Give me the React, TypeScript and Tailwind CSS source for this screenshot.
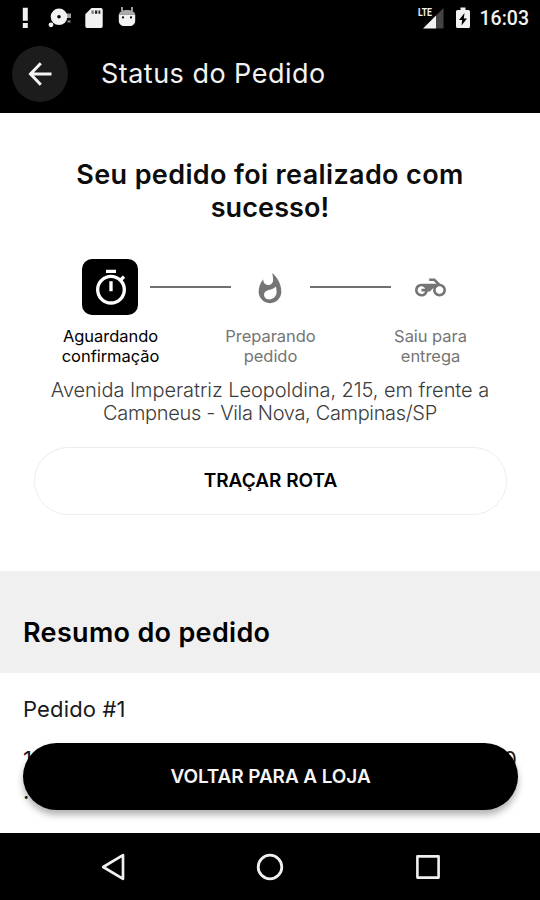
import React from "react";

const TIMER =
  "M15 1H9v2h6V1zm-4 13h2V8h-2v6zm8.03-6.61l1.42-1.42c-.43-.51-.9-.99-1.41-1.41l-1.42 1.42C16.07 4.74 14.12 4 12 4c-4.97 0-9 4.03-9 9s4.02 9 9 9 9-4.03 9-9c0-2.12-.74-4.07-1.97-5.61zM12 20c-3.87 0-7-3.13-7-7s3.13-7 7-7 7 3.13 7 7-3.13 7-7 7z";
const FLAME =
  "M13.5.67s.74 2.65.74 4.8c0 2.06-1.35 3.73-3.41 3.73-2.07 0-3.63-1.67-3.63-3.73l.03-.36C5.21 7.51 4 10.62 4 14c0 4.42 3.58 8 8 8s8-3.58 8-8C20 8.61 17.41 3.8 13.5.67zM11.4 19.400c-2.100 0-3.600-1.400-3.600-3.300 0-1.800 1.200-3 3.300-3.400 2-.4 3.900-1.200 5-2.500.4 1.200.6 2.500.6 3.800 0 3-2.300 5.400-5.300 5.400z";
const MOTORCYCLE =
  "M19.44 9.03L15.41 5H11v2h3.59l2 2H5c-2.8 0-5 2.2-5 5s2.2 5 5 5c2.46 0 4.45-1.69 4.9-4h1.65l2.77-2.77c-.21.54-.32 1.14-.32 1.77 0 2.8 2.2 5 5 5s5-2.2 5-5c0-2.65-1.97-4.77-4.56-4.97zM7.82 15C7.4 16.15 6.28 17 5 17c-1.63 0-3-1.37-3-3s1.37-3 3-3c1.28 0 2.4.85 2.82 2H5v2h2.82zM19 17c-1.66 0-3-1.34-3-3s1.34-3 3-3 3 1.34 3 3-1.34 3-3 3z";

function Glyph({ d, className }: { d: string; className: string }) {
  return (
    <svg viewBox="0 0 24 24" fill="currentColor" className={className}>
      <path d={d} />
    </svg>
  );
}

function StatusBar() {
  return (
    <div className="flex h-9 items-center pr-[11px] pl-[22px] font-['Roboto',sans-serif] text-[#f2f2f2]">
      <svg width="6" height="22" viewBox="0 0 6 22" fill="currentColor">
        <path d="M.8.8h5v13h-5zM.8 16h5v5h-5z" />
      </svg>
      <svg width="24" height="22" viewBox="0 0 24 22" fill="currentColor" className="ml-5">
        <path fillRule="evenodd" d="M11 1.500a8.300 8.300 0 1 1 0 16.600 8.300 8.300 0 0 1 0-16.600zm0 6.500a1.800 1.800 0 1 0 0 3.600 1.800 1.800 0 0 0 0-3.600z" />
        <circle cx="3" cy="17.800" r="2.400" />
        <path d="M18 6.500h5v4.500h-5z" opacity=".65" />
        <path d="M19.500 13.500h3v2h-3z" opacity=".6" />
      </svg>
      <svg width="18" height="22" viewBox="0 0 18 22" fill="currentColor" className="ml-[13px]">
        <path d="M6.500 1H16a1.700 1.700 0 0 1 1.700 1.700v16.600A1.700 1.700 0 0 1 16 21H2a1.700 1.700 0 0 1-1.700-1.700V7.200z" />
        <path d="M6.500 3.500h2.300v3.300H6.500z" fill="#777" />
        <path d="M10 3.500h2.300v3.300H10zM13.500 3.500h1.800v3.300h-1.800z" fill="#222" />
      </svg>
      <svg width="18" height="22" viewBox="0 0 18 22" fill="currentColor" className="ml-[15px]">
        <path d="M4 0v4M14 0v4" stroke="currentColor" strokeWidth="1.300" />
        <path d="M.8 7.500C1.500 4.500 4.500 3 9 3s7.500 1.500 8.200 4.500z" opacity=".7" />
        <path fillRule="evenodd" d="M.8 7.500h16.400v6c0 3.600-2.400 5.500-5.500 5.500H6.300C3.200 19 .8 17.100.8 13.500zM5 9.300a1.100 1.100 0 1 0 0 2.200 1.100 1.100 0 0 0 0-2.200zm8 0a1.100 1.100 0 1 0 0 2.200 1.100 1.100 0 0 0 0-2.200z" />
      </svg>
      <div className="ml-auto flex items-center">
        <svg width="28" height="24" viewBox="0 0 28 24" fill="currentColor">
          <path d="M25.500 2v20.500H18V9.500z" opacity=".28" />
          <path d="M18 9.500v13H5z" />
          <text x="0" y="9.800" fontSize="11.500" fontWeight="700" textLength="14" lengthAdjust="spacingAndGlyphs">
            LTE
          </text>
        </svg>
        <svg width="14" height="22" viewBox="0 0 14 22" fill="currentColor" className="ml-2.5">
          <path fillRule="evenodd" d="M4.500.5h5V3h3A1.500 1.500 0 0 1 14 4.500v15a1.500 1.500 0 0 1-1.500 1.500h-11A1.500 1.500 0 0 1 0 19.500v-15A1.500 1.500 0 0 1 1.500 3h3zM8.500 6L3 13h3.200L5.500 18.500l5.500-7H7.800z" />
        </svg>
        <span className="ml-2.5 pt-px text-[19.5px] leading-6 font-medium">16:03</span>
      </div>
    </div>
  );
}

function AppBar() {
  return (
    <header className="flex h-[77px] items-start pt-2.5 pl-3">
      <button className="flex size-14 items-center justify-center rounded-full bg-[#1c1c1c] text-[#f4f4f4]">
        <svg width="24" height="24" viewBox="0 0 24 24" fill="none" stroke="currentColor" strokeWidth="3">
          <path d="M12.800 1.200L2.500 12l10.300 10.800M2.500 12H23.500" />
        </svg>
      </button>
      <h1 className="ml-[33px] pt-3 text-[27px] leading-8 tracking-[0.47px] text-[#f2f2f2]">Status do Pedido</h1>
    </header>
  );
}

function Step({ icon, lines, active = false }: { icon: React.ReactNode; lines: string[]; active?: boolean }) {
  return (
    <div className={active ? "flex w-40 flex-col items-center text-black" : "flex w-40 flex-col items-center text-[#757575]"}>
      <div className={active ? "flex size-14 items-center justify-center rounded-[10px] bg-black text-white" : "flex size-14 items-center justify-center"}>
        {icon}
      </div>
      <p className="mt-3 pl-px text-center text-[16.5px] leading-[19.5px] tracking-[-0.05px]">
        {lines[0]}
        <br />
        {lines[1]}
      </p>
    </div>
  );
}

function Progress() {
  return (
    <div className="mt-[35px] grid grid-cols-[160px_160px_160px] pl-[30px]">
      <Step active icon={<Glyph d={TIMER} className="mt-0.5 ml-0.5 size-10" />} lines={["Aguardando", "confirmação"]} />
      <div className="flex">
        <div className="mt-[27px] -mr-10 -ml-10 h-0.5 w-[81px] shrink-0 bg-[#707070]" />
        <div className="-ml-[1px] flex w-40 shrink-0 justify-center">
          <Step icon={<Glyph d={FLAME} className="mt-1 size-[34px]" />} lines={["Preparando", "pedido"]} />
        </div>
      </div>
      <div className="flex">
        <div className="mt-[27px] -mr-10 -ml-10 h-0.5 w-[81px] shrink-0 bg-[#707070]" />
        <div className="-ml-[1px] flex w-40 shrink-0 justify-center">
          <Step icon={<Glyph d={MOTORCYCLE} className="size-[31px]" />} lines={["Saiu para", "entrega"]} />
        </div>
      </div>
    </div>
  );
}

export default function App() {
  return (
    <div className="flex h-[900px] w-[540px] flex-col overflow-hidden bg-black font-['Inter',sans-serif]">
      <StatusBar />
      <AppBar />
      <main className="relative h-[720px] overflow-hidden bg-white">
        <section className="h-[458px] pt-[45px]">
          <h2 className="text-center text-[27px] leading-[33px] font-semibold tracking-[0.36px] text-[#0c0c0c]">
            Seu pedido foi realizado com
            <br />
            <span className="tracking-[0.1px]">sucesso!</span>
          </h2>
          <Progress />
          <p className="mt-[13px] text-center text-[20px] leading-[23px] font-light text-[#3c3c3c]">
            <span className="tracking-[-0.06px]">Avenida Imperatriz Leopoldina, 215, em frente a</span>
            <br />
            <span className="tracking-[-0.34px]">Campneus - Vila Nova, Campinas/SP</span>
          </p>
          <button className="mt-[22px] ml-[34px] block h-[68px] w-[473px] rounded-full border border-[#ededed] pt-px text-[19px] font-semibold text-black">
            TRAÇAR ROTA
          </button>
        </section>
        <section className="h-[102px] bg-[#f0f0f0] pt-[46px] pl-[23px]">
          <h2 className="text-[27px] leading-8 font-semibold tracking-[0.32px] text-black">Resumo do pedido</h2>
        </section>
        <section className="px-[23px] pt-6 text-[22px] leading-6 text-[#1a1a1a]">
          <p className="tracking-[0.15px]">Pedido #1</p>
          <div className="mt-[26px] flex justify-between">
            <span>1x</span>
            <span>0</span>
          </div>
          <p className="mt-2">.</p>
        </section>
        <button className="absolute top-[630px] left-[23px] h-[67px] w-[495px] rounded-full bg-black pt-px text-[19px] font-semibold tracking-[-0.1px] text-[#f5f5f5] shadow-[0_5px_7px_rgba(0,0,0,0.3)]">
          VOLTAR PARA A LOJA
        </button>
      </main>
      <nav className="flex h-[67px] items-center text-[#f0f0f0]">
        <svg width="24" height="28" viewBox="0 0 24 28" fill="none" stroke="currentColor" strokeWidth="2.700" strokeLinejoin="round" className="ml-[101px]">
          <path d="M22 2.200v23.600L2.200 14z" />
        </svg>
        <svg width="28" height="28" viewBox="0 0 28 28" fill="none" stroke="currentColor" strokeWidth="2.800" className="ml-[131px]">
          <circle cx="14" cy="14" r="11.800" />
        </svg>
        <svg width="26" height="26" viewBox="0 0 26 26" fill="none" stroke="currentColor" strokeWidth="2.600" strokeLinejoin="round" className="ml-[131px]">
          <path d="M2.400 2.400h21.200v21.200H2.400z" />
        </svg>
      </nav>
    </div>
  );
}
